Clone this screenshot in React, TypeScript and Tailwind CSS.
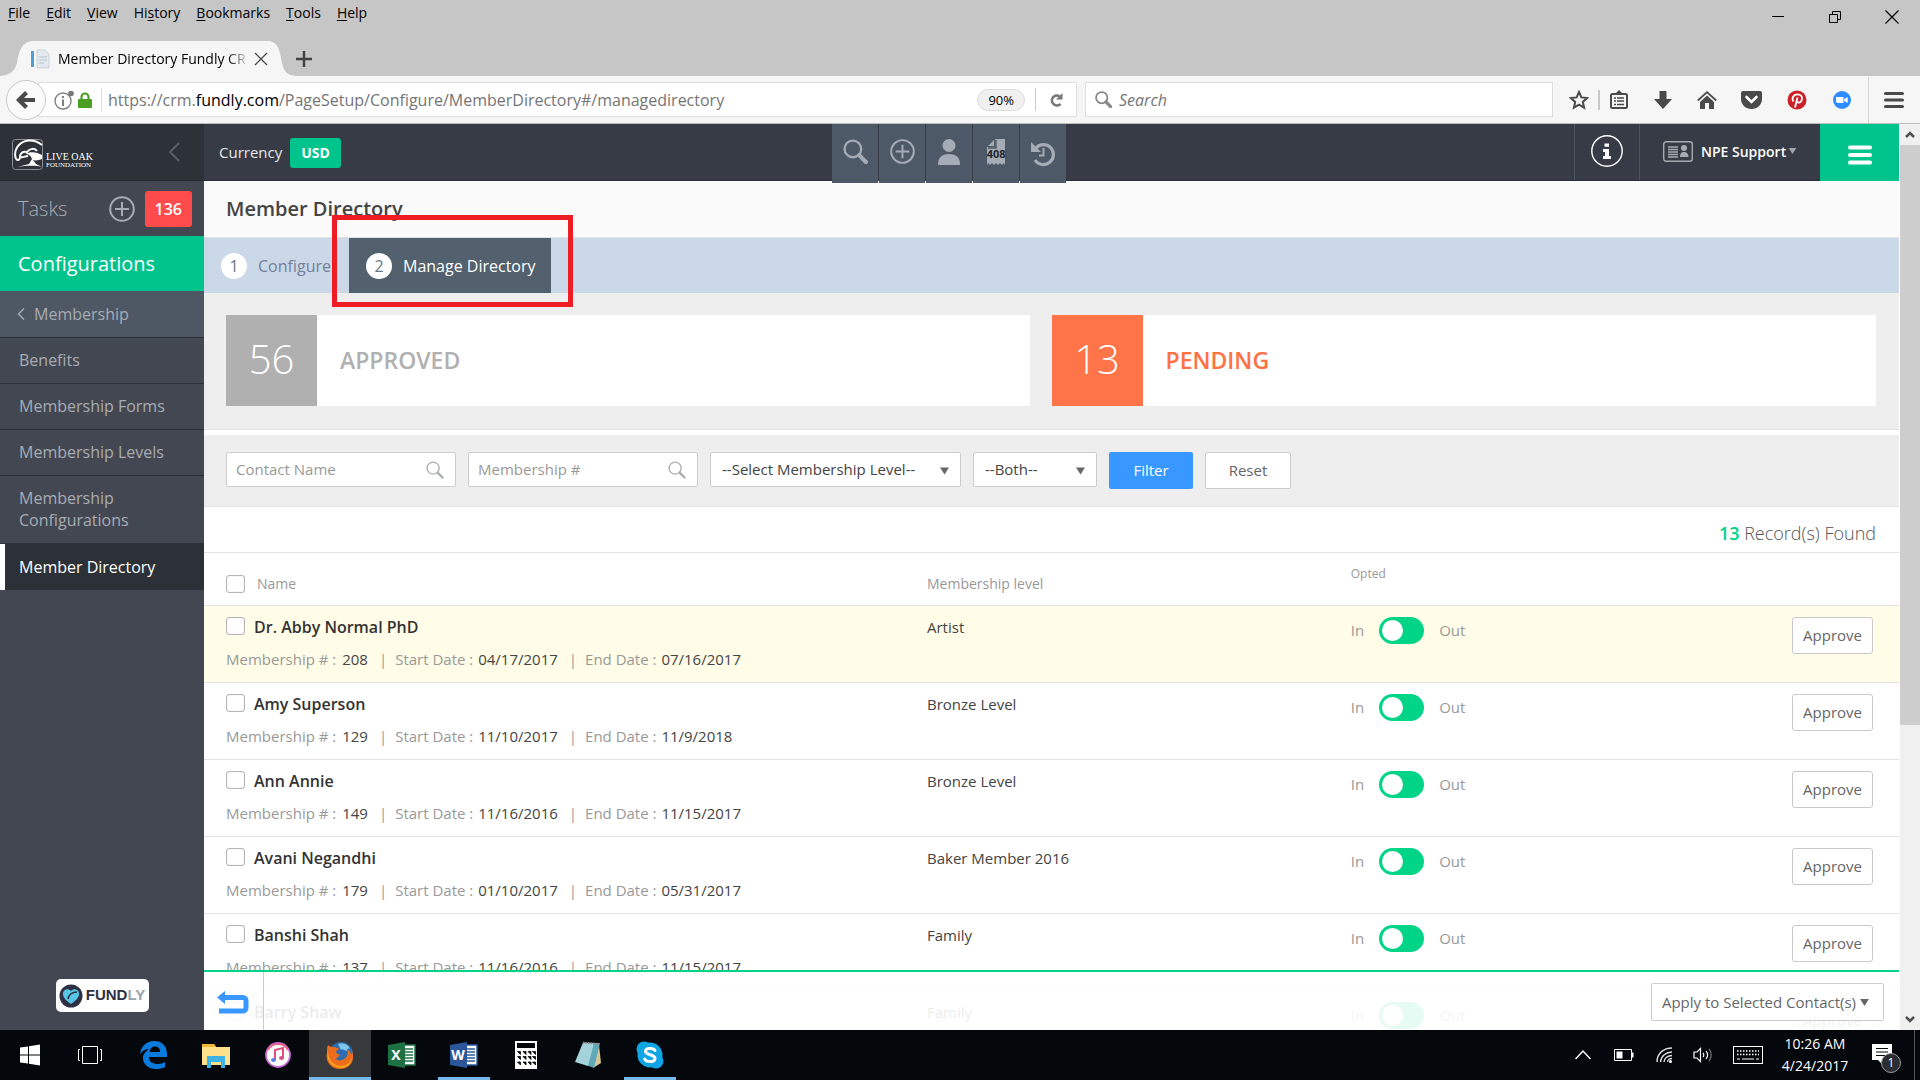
import type { ReactNode } from 'react'
import clsx from 'clsx'

const menuItems = [
  { key: 'F', before: '', after: 'ile' },
  { key: 'E', before: '', after: 'dit' },
  { key: 'V', before: '', after: 'iew' },
  { key: 's', before: 'Hi', after: 'tory' },
  { key: 'B', before: '', after: 'ookmarks' },
  { key: 'T', before: '', after: 'ools' },
  { key: 'H', before: '', after: 'elp' },
]

const sidebarLinks = ['Benefits', 'Membership Forms', 'Membership Levels', 'Membership Configurations']

interface Member {
  name: string
  number: string
  start: string
  end: string
  level: string
  highlighted?: boolean
}

const members: Member[] = [
  { name: 'Dr. Abby Normal PhD', number: '208', start: '04/17/2017', end: '07/16/2017', level: 'Artist', highlighted: true },
  { name: 'Amy Superson', number: '129', start: '11/10/2017', end: '11/9/2018', level: 'Bronze Level' },
  { name: 'Ann Annie', number: '149', start: '11/16/2016', end: '11/15/2017', level: 'Bronze Level' },
  { name: 'Avani Negandhi', number: '179', start: '01/10/2017', end: '05/31/2017', level: 'Baker Member 2016' },
  { name: 'Banshi Shah', number: '137', start: '11/16/2016', end: '11/15/2017', level: 'Family' },
  { name: 'Barry Shaw', number: '141', start: '11/16/2016', end: '11/15/2017', level: 'Family' },
]

const SearchIcon = ({ className, width = 2 }: { className?: string; width?: number }) => (
  <svg viewBox="0 0 24 24" className={className} fill="none" stroke="currentColor" aria-hidden="true">
    <circle cx="9.5" cy="9.5" r="8" strokeWidth={width} />
    <path d="M15.5 15.5 22 22" strokeWidth={width * 1.8} strokeLinecap="round" />
  </svg>
)

const PlusCircleIcon = ({ className }: { className?: string }) => (
  <svg viewBox="0 0 26 26" className={className} fill="none" stroke="currentColor" strokeWidth="2" aria-hidden="true">
    <circle cx="13" cy="13" r="11.8" />
    <path d="M13 6v14M6 13h14" />
  </svg>
)

const CaretIcon = ({ className }: { className?: string }) => (
  <svg viewBox="0 0 10 8" className={className} fill="currentColor" aria-hidden="true">
    <path d="M0 0h10L5 8z" />
  </svg>
)

/* Browser window */

const TitleBar = () => (
  <div className="flex h-[41px] shrink-0 items-start justify-between bg-[#c6c6c6]">
    <nav className="flex gap-4 pl-2 pt-[3px] text-[14px] leading-5 text-black">
      {menuItems.map(({ key, before, after }) => (
        <button key={key + after} type="button">
          {before}
          <span className="underline underline-offset-2">{key}</span>
          {after}
        </button>
      ))}
    </nav>
    <div className="flex gap-[43px] pr-[21px] pt-[10px]">
      <button type="button" aria-label="Minimize">
        <svg viewBox="0 0 14 14" className="size-[14px]" stroke="#000"><path d="M1 6.5h12" /></svg>
      </button>
      <button type="button" aria-label="Restore">
        <svg viewBox="0 0 14 14" className="size-[14px]" fill="none" stroke="#000">
          <path d="M1.5 4.5h8v8h-8zM4.5 4.5v-3h8v8h-3" />
        </svg>
      </button>
      <button type="button" aria-label="Close">
        <svg viewBox="0 0 14 14" className="size-[14px]" stroke="#000" strokeWidth="1.2"><path d="M.5.5l13 13M13.5.5l-13 13" /></svg>
      </button>
    </div>
  </div>
)

const TabStrip = () => (
  <div className="flex h-[35px] shrink-0 bg-[#c6c6c6]">
    <svg viewBox="0 0 34 35" className="h-[35px] w-[34px] shrink-0" fill="#f6f6f6" aria-hidden="true">
      <path d="M0 35c10-1 15-5 17-13C19 10 22 0 34 0v35z" />
      <path d="M31 10h3v16h-3z" fill="#4f9fd6" />
    </svg>
    <div className="flex items-center bg-[#f6f6f6]">
      <svg viewBox="0 0 16 20" className="mr-2 h-5 w-4" aria-hidden="true">
        <path d="M3 1h8l4 4v14H3z" fill="#e3e9ee" stroke="#c3ccd4" strokeWidth=".8" />
        <path d="M5 8h8M5 11h8M5 14h5" stroke="#b9c3cc" strokeWidth="1.2" />
      </svg>
      <span className="bg-gradient-to-r from-black from-88% to-[#ccc] bg-clip-text text-[14px] whitespace-nowrap text-transparent">
        Member Directory Fundly CR
      </span>
      <button type="button" aria-label="Close tab" className="ml-2">
        <svg viewBox="0 0 14 14" className="size-[14px]" stroke="#4a4a4a" strokeWidth="1.3"><path d="M1 1l12 12M13 1L1 13" /></svg>
      </button>
    </div>
    <svg viewBox="0 0 28 35" className="h-[35px] w-7 shrink-0" fill="#f6f6f6" aria-hidden="true">
      <path d="M0 0c10 0 12 10 14 22 2 8 4 12 14 13H0z" />
    </svg>
    <button type="button" aria-label="New tab">
      <svg viewBox="0 0 16 16" className="size-4" stroke="#444" strokeWidth="2.5"><path d="M8 0v16M0 8h16" /></svg>
    </button>
  </div>
)

const NavBar = () => (
  <div className="flex h-12 shrink-0 items-center border-b border-[#bcbcbc] bg-[#f6f6f6]">
    <button
      type="button"
      aria-label="Back"
      className="z-10 ml-[6px] flex size-10 shrink-0 items-center justify-center rounded-full border border-[#c8c8c8] bg-[#fafafa]"
    >
      <svg viewBox="0 0 20 20" className="size-5" fill="none" stroke="#4a4a4a" strokeWidth="4.2">
        <path d="M10.5 2.5 3 10l7.500 7.500M4 10h15" />
      </svg>
    </button>
    <div className="-ml-2 flex h-[35px] flex-1 items-center border border-[#dedede] bg-white pl-[15px]">
      <svg viewBox="0 0 20 20" className="size-5" fill="none" stroke="#808080" strokeWidth="1.4" aria-hidden="true">
        <circle cx="9" cy="11" r="8" />
        <path d="M9 9.500V16M9 6v2" strokeWidth="2" />
        <circle cx="17" cy="3.5" r="2.8" fill="#777" stroke="none" />
      </svg>
      <svg viewBox="0 0 14 16" className="ml-1 h-4 w-[14px]" aria-hidden="true">
        <path d="M3.5 8V5a3.5 3.5 0 0 1 7 0v3" fill="none" stroke="#4a9e23" strokeWidth="2.2" />
        <rect x="0" y="7" width="14" height="9" rx="1" fill="#4a9e23" />
      </svg>
      <span className="ml-[9px] h-[23px] w-px bg-[#ddd]" />
      <span className="ml-[6px] flex-1 text-[16px] text-[#757575]">
        https://crm.<span className="text-black">fundly.com</span>/PageSetup/Configure/MemberDirectory#/managedirectory
      </span>
      <button type="button" className="rounded-full border border-[#ddd] bg-[#f0f0f0] px-[10px] text-[13px] leading-5 text-black">
        90%
      </button>
      <span className="ml-[10px] h-[23px] w-px bg-[#ccc]" />
      <button type="button" aria-label="Reload" className="mx-[13px]">
        <svg viewBox="0 0 14 16" className="h-4 w-[14px]" fill="none" stroke="#777" strokeWidth="2.6">
          <path d="M10.5 4.200A5 5 0 1 0 11.5 12" />
          <path d="M13.5 1v6.500H7z" fill="#777" stroke="none" />
        </svg>
      </button>
    </div>
    <div className="ml-2 flex h-[35px] w-[468px] items-center border border-[#dedede] bg-white pl-[9px]">
      <SearchIcon className="mr-[7px] size-[17px] text-[#888]" width={2.5} />
      <input aria-label="Search" placeholder="Search" className="flex-1 text-[16px] italic outline-none placeholder:text-[#757575]" />
    </div>
    <div className="flex items-center pl-4">
      <svg viewBox="0 0 20 20" className="size-5" fill="none" stroke="#4a4a4a" strokeWidth="2" aria-hidden="true">
        <path d="m10 2 2.400 5.400 5.800.6-4.400 3.900 1.300 5.800-5.100-3-5.100 3 1.300-5.800L1.800 8l5.800-.6z" />
      </svg>
      <span className="ml-[9px] h-5 w-[2px] bg-[#c8c8c8]" />
      <svg viewBox="0 0 18 20" className="ml-[10px] h-5 w-[18px]" fill="none" stroke="#4a4a4a" strokeWidth="2" aria-hidden="true">
        <rect x="1" y="4" width="16" height="14" rx="1.5" />
        <path d="m5 4 4-4 4 4z" fill="#4a4a4a" stroke="none" />
        <path d="M4 8h2M7 8h7M4 11h2M7 11h7M4 14.500h2M7 14.500h7" strokeWidth="1.6" />
      </svg>
      <svg viewBox="0 0 18 18" className="ml-[26px] size-[18px]" fill="#4a4a4a" aria-hidden="true">
        <path d="M5.500 0h7v8H18l-9 10L0 8h5.500z" />
      </svg>
      <svg viewBox="0 0 20 18" className="ml-[25px] h-[18px] w-5" fill="#4a4a4a" aria-hidden="true">
        <path d="M10 4.500 17 11v7h-5v-6H8v6H3v-7z" />
        <path d="m.8 9.500 9.200-8.300 9.200 8.300" fill="none" stroke="#4a4a4a" strokeWidth="1.8" />
      </svg>
      <svg viewBox="0 0 21 18" className="ml-6 h-[18px] w-[21px]" aria-hidden="true">
        <path d="M2 0h17a2 2 0 0 1 2 2v6c0 6-5 10-10.500 10S0 14 0 8V2a2 2 0 0 1 2-2z" fill="#4a4a4a" />
        <path d="m5.500 6 5 5 5-5" fill="none" stroke="#fff" strokeWidth="2.6" strokeLinecap="round" />
      </svg>
      <svg viewBox="0 0 20 20" className="ml-[25px] size-5" aria-hidden="true">
        <circle cx="10" cy="10" r="9.5" fill="#cb2027" />
        <path d="M6.500 11.500C4 7.500 7 4.300 10.500 4.300c3 0 4.800 2 4.500 4.500-.3 3-2.500 4.500-4.200 3.600-.8-.4-1-.9-1-1.400M10.500 7.500 8 17.500" fill="none" stroke="#fff" strokeWidth="1.8" />
      </svg>
      <svg viewBox="0 0 18 18" className="ml-[26px] size-[18px]" aria-hidden="true">
        <circle cx="9" cy="9" r="9" fill="#2d8cff" />
        <path d="M3 6h7.500v6H5a2 2 0 0 1-2-2zM11.200 8l3.500-2v6l-3.500-2z" fill="#fff" />
      </svg>
      <span className="ml-[17px] h-[46px] w-px bg-[#d5d5d5]" />
      <button type="button" aria-label="Open menu" className="mr-4 ml-[15px]">
        <svg viewBox="0 0 20 18" className="h-[18px] w-5" stroke="#4a4a4a" strokeWidth="3" strokeLinecap="round">
          <path d="M1.500 2.500h17M1.500 9h17M1.500 15.500h17" />
        </svg>
      </button>
    </div>
  </div>
)

/* CRM page */

const Sidebar = () => (
  <aside className="flex w-[204px] shrink-0 flex-col bg-[#434751] text-[16px] text-[#a7acb4]">
    <div className="flex h-[57px] items-center justify-between border-b border-[#262b31] bg-[#2d3239] pr-6 pl-3">
      <a href="#home" className="flex items-center gap-[3px] pt-1 text-white">
        <svg viewBox="0 0 31 31" className="size-[31px]" fill="none" stroke="#fff" aria-hidden="true">
          <rect x=".5" y=".5" width="30" height="30" rx="3" stroke="#8a8f96" />
          <path d="M4 20C1 12 6 3 16 1.500c6-.5 10 1 14 4.500" strokeWidth="2" />
          <path d="M4 20c2 2 4 1 4-2 0-4 3-6 7-5 3-4 8-4 10-1M8 18c3 1 5-1 8-1" strokeWidth="2" />
          <path d="M13 15c4 0 6 2 7 5l-3 5-12 3c8-1 17-2 25 0l-6-3-3-4c3 1 6 0 9-1v-4c-5-3-11-4-17-1z" fill="#fff" stroke="none" />
        </svg>
        <span className="flex flex-col pt-3 font-['Liberation_Serif',serif]">
          <span className="text-[10px] leading-[10px]">LIVE OAK</span>
          <span className="text-[7px] leading-[7px]">FOUNDATION</span>
        </span>
      </a>
      <button type="button" aria-label="Collapse sidebar">
        <svg viewBox="0 0 12 20" className="h-5 w-3" fill="none" stroke="#5b626c" strokeWidth="1.8"><path d="M11 1 2 10l9 9" /></svg>
      </button>
    </div>
    <div className="flex h-[55px] items-center pr-3 pl-[18px]">
      <span className="flex-1 text-[20px] font-light">Tasks</span>
      <button type="button" aria-label="Add task">
        <PlusCircleIcon className="size-[26px]" />
      </button>
      <span className="ml-[10px] rounded-[3px] bg-[#ff4b4b] px-[10px] text-[16px] leading-9 font-semibold text-white">136</span>
    </div>
    <a href="#configurations" className="bg-[#00c48c] pl-[18px] text-[20px] leading-[55px] text-white">
      Configurations
    </a>
    <a href="#membership" className="flex h-[47px] items-center gap-[9px] border-b border-[#2c3138] bg-[#4e5865] pl-[17px]">
      <svg viewBox="0 0 8 12" className="h-3 w-2" fill="none" stroke="currentColor" strokeWidth="1.4" aria-hidden="true"><path d="M7 .5 1.500 6 7 11.500" /></svg>
      Membership
    </a>
    {sidebarLinks.map((label) => (
      <a key={label} href="#link" className="border-b border-[#2c3138] pt-[11px] pr-6 pb-3 pl-[19px] leading-[22px]">
        {label}
      </a>
    ))}
    <div className="border-l-[5px] border-white bg-[#2c3138] pl-[14px]">
      <a href="#directory" aria-current="page" className="block leading-[46px] text-white">Member Directory</a>
    </div>
    <div className="mx-auto mt-auto mb-[18px] flex h-[33px] w-[93px] items-center justify-center gap-[3px] rounded-[5px] bg-white">
      <svg viewBox="0 0 24 24" className="size-6" aria-hidden="true">
        <circle cx="12" cy="12" r="11.5" fill="#2f3042" />
        <path d="M12 20C6 16 3.500 12.500 4 9c.5-4 5.500-5 8-2 2.500-3 7.500-2 8 2 .5 3.500-2 7-8 11z" fill="#56c5e6" />
        <path d="M9 15c1-5 4-7 9-7" fill="none" stroke="#2f3042" strokeWidth="1.5" />
      </svg>
      <span className="font-['Liberation_Sans',sans-serif] text-[15px] font-bold text-[#2f3042]">
        FUND<span className="text-[#9ba4ab]">LY</span>
      </span>
    </div>
  </aside>
)

const ToolButton = ({ label, children }: { label: string; children: ReactNode }) => (
  <button type="button" aria-label={label} className="relative flex h-[59px] w-[46px] items-center justify-center bg-[#4e5967] pb-1 text-[#a6acb5]">
    {children}
  </button>
)

const PageHeader = () => (
  <header className="flex h-[57px] shrink-0 items-start border-b border-[#2a2f38] bg-[#363b45] text-white">
    <div className="flex h-14 w-[37%] items-center gap-2 pt-px pl-[15px] text-[15px] text-[#e4e6e9]">
      Currency
      <button type="button" className="rounded-[3px] bg-[#00c48c] px-[11px] text-[14px] leading-[30px] font-bold text-white">USD</button>
    </div>
    <div className="z-10 ml-px flex gap-px">
      <ToolButton label="Search"><SearchIcon className="size-[25px]" width={2.2} /></ToolButton>
      <ToolButton label="Add"><PlusCircleIcon className="size-[25px]" /></ToolButton>
      <ToolButton label="Contacts">
        <svg viewBox="0 0 22 26" className="h-[26px] w-[22px]" fill="currentColor">
          <circle cx="11" cy="6.5" r="6.5" />
          <path d="M0 26c0-7 3-11 11-11s11 4 11 11z" />
        </svg>
      </ToolButton>
      <ToolButton label="Receipts">
        <svg viewBox="0 0 18 26" className="h-[26px] w-[18px]" fill="currentColor">
          <path d="M8 0h10v26l-1.500-2-1.500 2-2-2-2 2-2-2-2 2-2-2-2 2-1.500-2L0 26V8h8z" />
          <path d="M7 1v6H1z" />
          <path d="M9 1v8H1" fill="none" stroke="#4e5967" strokeWidth="1.5" />
        </svg>
        <span className="absolute inset-x-0 top-[22px] text-center text-[11px] leading-4 font-bold text-[#22262c]">408</span>
      </ToolButton>
      <ToolButton label="History">
        <svg viewBox="0 0 24 26" className="mt-1 h-[26px] w-6" fill="none" stroke="currentColor" strokeWidth="3.2">
          <path d="M4.500 7.500A10 10 0 1 1 4 19" />
          <path d="M0 1v10h10z" fill="currentColor" stroke="none" />
          <path d="M12.500 7v7.500H8" strokeWidth="2" />
        </svg>
      </ToolButton>
    </div>
    <div className="ml-auto flex h-14 items-center">
      <button type="button" aria-label="Information" className="flex h-14 w-[65px] items-center justify-center border-l border-[#4b5260] pb-[2px]">
        <svg viewBox="0 0 32 32" className="size-8" fill="none" stroke="#fff" strokeWidth="1.4">
          <circle cx="16" cy="16" r="15.2" />
          <path d="M13.500 8.500h4.500v3.200h-4.500zM12 14h6v7h2v3h-8v-3h2v-4h-2z" fill="#fff" stroke="none" />
        </svg>
      </button>
      <button type="button" className="flex h-14 w-[181px] items-center border-l border-[#4b5260] pb-[2px] pl-[23px] text-[14px] font-semibold">
        <svg viewBox="0 0 30 21" className="mr-2 h-[21px] w-[30px]" fill="none" stroke="#a6abb2" aria-hidden="true">
          <rect x=".7" y=".7" width="28.6" height="19.6" rx="2.5" strokeWidth="1.4" />
          <path d="M5 6h10M5 8.500h10M5 11h10M5 13.500h10M5 16h10" strokeWidth="1.3" />
          <circle cx="21" cy="7" r="3" fill="#a6abb2" stroke="none" />
          <path d="M17 16c0-3 1-5 4-5s4.500 2 4.500 5z" fill="#a6abb2" stroke="none" />
        </svg>
        NPE Support
        <CaretIcon className="ml-[2px] h-[6px] w-[9px] text-[#a0a7b3]" />
      </button>
      <button type="button" aria-label="Menu" className="flex h-[57px] w-[79px] items-center justify-center self-start bg-[#00c48c]">
        <svg viewBox="0 0 24 20" className="mt-1 h-5 w-6" stroke="#fff" strokeWidth="4" strokeLinecap="round">
          <path d="M2 2.500h20M2 10h20M2 17.500h20" />
        </svg>
      </button>
    </div>
  </header>
)

const StepNumber = ({ children }: { children: ReactNode }) => (
  <span className="flex size-[26px] items-center justify-center rounded-full bg-white text-[16px] text-[#6b7785]">{children}</span>
)

const Steps = () => (
  <nav className="flex h-[55px] shrink-0 bg-[#cbd8e8] text-[16px]">
    <a href="#configure" className="flex w-[145px] items-center gap-[11px] pl-[17px] text-[#73819a]">
      <StepNumber>1</StepNumber>
      Configure
    </a>
    <a href="#manage" aria-current="step" className="relative flex items-center gap-[11px] bg-[#53606d] pr-[15px] pl-[17px] whitespace-nowrap text-white">
      <StepNumber>2</StepNumber>
      Manage Directory
      <span className="pointer-events-none absolute -top-[23px] -right-[22px] -bottom-[14px] -left-[17px] border-[5px] border-[#ee1c24]" />
    </a>
  </nav>
)

const CountCard = ({ count, label, pending }: { count: number; label: string; pending?: boolean }) => (
  <div className={clsx('flex h-[91px] flex-1 items-center bg-white text-[23px] font-semibold', pending ? 'text-[#ff7043]' : 'text-[#b0b0b0]')}>
    <span
      className={clsx(
        'flex h-full w-[91px] items-center justify-center pb-1 text-[40px] font-light text-white',
        pending ? 'bg-[#ff7448]' : 'bg-[#b0b0b0]',
      )}
    >
      {count}
    </span>
    <span className="pl-[23px]">{label}</span>
  </div>
)

const FilterInput = ({ label }: { label: string }) => (
  <div className="relative w-[230px]">
    <input
      aria-label={label}
      placeholder={label}
      className="h-[35px] w-full rounded-[2px] border border-[#ccc] bg-white pr-9 pb-[2px] pl-[9px] text-[15px] outline-none placeholder:text-[#999]"
    />
    <SearchIcon className="absolute top-[9px] right-3 size-[18px] text-[#a9afb5]" width={1.8} />
  </div>
)

const FilterSelect = ({ label, option, className }: { label: string; option: string; className: string }) => (
  <div className={clsx('relative', className)}>
    <select aria-label={label} className="h-[35px] w-full appearance-none rounded-[2px] border border-[#ccc] bg-white pl-[11px] text-[15px] text-[#444] outline-none">
      <option>{option}</option>
    </select>
    <CaretIcon className="pointer-events-none absolute top-[15px] right-3 h-2 w-[9px] text-[#666]" />
  </div>
)

const Filters = () => (
  <form className="mt-[5px] flex h-[72px] shrink-0 items-start border-b border-[#e2e2e2] bg-[#eee] pt-[17px] pl-[22px]">
    <div className="flex gap-3">
      <FilterInput label="Contact Name" />
      <FilterInput label="Membership #" />
      <FilterSelect label="Membership level" option="--Select Membership Level--" className="w-[251px]" />
      <FilterSelect label="Status" option="--Both--" className="w-[124px]" />
      <button type="button" className="h-[37px] w-[84px] rounded-[2px] bg-[#3898ff] text-[15px] text-white">Filter</button>
      <button type="button" className="h-[37px] w-[86px] rounded-[2px] border border-[#ccc] bg-white text-[15px] text-[#666]">Reset</button>
    </div>
  </form>
)

const CheckBox = ({ label, className }: { label: string; className?: string }) => (
  <input
    type="checkbox"
    aria-label={label}
    className={clsx('h-[18px] w-[19px] shrink-0 appearance-none rounded-[3px] border border-[#b5b5b5] bg-white shadow-[inset_0_0_1px_#bbb]', className)}
  />
)

const MemberRow = ({ name, number, start, end, level, highlighted }: Member) => (
  <tr className={clsx('h-[77px] border-b border-[#e2e2e2] align-top', highlighted && 'bg-[#fffde7]')}>
    <td className="pl-[22px]">
      <label className="flex items-center gap-[9px] pt-[9px] text-[16px] leading-6 font-semibold text-[#333]">
        <CheckBox label={name} className="-mt-[2px]" />
        {name}
      </label>
      <div className="mt-2 flex text-[15px] leading-6 text-[#999]">
        <span className="pr-[11px]">Membership # : <span className="pl-[2px] text-[#444]">{number}</span></span>|
        <span className="pr-[11px] pl-2">Start Date : <span className="pl-px text-[#444]">{start}</span></span>|
        <span className="pl-2">End Date : <span className="pl-px text-[#444]">{end}</span></span>
      </div>
    </td>
    <td className="pt-[10px] text-[15px] leading-[22px] text-[#444]">{level}</td>
    <td className="pt-[11px]">
      <label className="flex w-fit items-center gap-[15px] text-[15px] text-[#999]">
        In
        <input
          type="checkbox"
          role="switch"
          aria-label={`${name} opted out`}
          className="h-[27px] w-[45px] appearance-none rounded-full bg-[#00d587] before:mt-[3px] before:ml-[3px] before:block before:size-[21px] before:rounded-full before:bg-white"
        />
        Out
      </label>
    </td>
    <td className="pt-[11px] pr-[26px] text-right">
      <button type="button" className="h-[37px] rounded-[3px] border border-[#c9c9c9] bg-white px-[10px] text-[15px] text-[#666]">Approve</button>
    </td>
  </tr>
)

const MemberTable = () => (
  <table className="w-full table-fixed border-collapse text-left">
    <colgroup>
      <col className="w-[723px]" />
      <col className="w-[25%]" />
      <col />
      <col className="w-[150px]" />
    </colgroup>
    <thead>
      <tr className="h-[52px] border-b border-[#e2e2e2] align-top text-[14px] leading-5 text-[#999]">
        <th className="pt-[21px] pl-[22px] font-normal">
          <span className="flex items-center gap-3">
            <CheckBox label="Select all" />
            Name
          </span>
        </th>
        <th className="pt-[21px] font-normal">Membership level</th>
        <th className="pt-[11px] text-[12px] font-normal">Opted</th>
        <th aria-label="Actions" />
      </tr>
    </thead>
    <tbody>
      {members.map((member) => (
        <MemberRow key={member.name} {...member} />
      ))}
    </tbody>
  </table>
)

const ActionBar = () => (
  <footer className="absolute inset-x-0 bottom-0 flex h-[60px] items-center justify-between border-t-2 border-[#00d587] bg-white/90 pr-[15px]">
    <button type="button" aria-label="Back to configure" className="flex h-full w-[60px] items-center justify-center border-r border-[#ccc] pt-1 pr-[2px]">
      <svg viewBox="0 0 32 24" className="h-6 w-8" fill="none" stroke="#3898ff" strokeWidth="5">
        <path d="M5 6.500h21a3 3 0 0 1 3 3V17a3 3 0 0 1-3 3H2" />
        <path d="M8 0v13L0 6.500z" fill="#3898ff" stroke="none" />
      </svg>
    </button>
    <button type="button" className="mt-[2px] flex h-[38px] items-center rounded-[2px] border border-[#ccc] bg-white px-[10px] text-[15px] text-[#666]">
      Apply to Selected Contact(s)
      <CaretIcon className="mx-1 h-[7px] w-[9px]" />
    </button>
  </footer>
)

const ScrollBar = () => (
  <div className="flex w-[21px] shrink-0 flex-col items-center border-l border-white bg-[#f0f0f0]">
    <svg viewBox="0 0 20 21" className="h-[21px] w-5 shrink-0" fill="none" stroke="#505050" strokeWidth="2.5" aria-hidden="true"><path d="m6 13 4-4 4 4" /></svg>
    <span className="h-[64%] w-5 bg-[#cdcdcd]" />
    <svg viewBox="0 0 20 21" className="mt-auto h-[21px] w-5 shrink-0" fill="none" stroke="#505050" strokeWidth="2.5" aria-hidden="true"><path d="m6 8 4 4 4-4" /></svg>
  </div>
)

/* Taskbar */

const TaskItem = ({ label, active, open, children }: { label: string; active?: boolean; open?: boolean; children: ReactNode }) => (
  <button
    type="button"
    aria-label={label}
    className={clsx('relative flex h-full w-[62px] items-center justify-center', active && 'bg-[#37393c]')}
  >
    <svg viewBox="0 0 28 28" className="size-7">{children}</svg>
    {(active || open) && <span className={clsx('absolute bottom-0 h-[3px] bg-[#76b9ed]', active ? 'inset-x-0' : 'inset-x-[5px]')} />}
  </button>
)

const OfficeIcon = ({ color, letter }: { color: string; letter: string }) => (
  <>
    <path d="M15 4h12v20H15z" fill="#fff" stroke={color} strokeWidth="1.5" />
    <path d="M17 8h8M17 11h8M17 14h8M17 17h8M17 20h8" stroke={color} strokeWidth="1.5" />
    <path d="M0 4 17 1v26L0 24z" fill={color} />
    <text x="8" y="19" textAnchor="middle" fill="#fff" fontSize="14" fontWeight="700">{letter}</text>
  </>
)

const TaskBar = () => (
  <div className="flex h-[50px] shrink-0 items-center justify-between bg-[#04070b] text-white">
    <div className="-ml-px flex h-full">
      <TaskItem label="Start">
        <path d="M4 6.500 12 5.400v8.100H4zM13 5.200 24 3.600v9.900H13zM4 14.500h8v8.100l-8-1.100zM13 14.500h11v9.900l-11-1.600z" fill="#fff" />
      </TaskItem>
      <TaskItem label="Task View">
        <path d="M4.500 5.500h15v17h-15zM2 8.500H.5v11H2M22 8.500h1.500v11H22" fill="none" stroke="#fff" />
      </TaskItem>
      <TaskItem label="Edge">
        <path d="M0 13C1 5 7 0 14 0c9 0 13 6 13 13v3H9c0 5 4 7 9 7 3 0 5-1 7-2v5c-3 1.500-6 2-9 2-8 0-13-5-13-11 0-4 3-7 6-9-4 0-7 2-9 5zM9.500 11H20c0-3-1-5.500-5-5.500-3 0-5 2-5.500 5.500z" fill="#0a7bdc" />
      </TaskItem>
      <TaskItem label="File Explorer">
        <path d="M0 3h12l2 3h14v18H0z" fill="#ffe08a" />
        <path d="M0 3h12l2 3H0z" fill="#f2b632" />
        <path d="M5 15h18v12h-4v-6H9v6H5z" fill="#3db3e6" />
      </TaskItem>
      <TaskItem label="iTunes">
        <circle cx="14" cy="14" r="12" fill="#fff" stroke="#c56bd6" strokeWidth="1.8" />
        <path d="M4 9a11.500 11.500 0 0 1 20 0" fill="none" stroke="#f2607d" strokeWidth="1.8" />
        <path d="M11 19V9l8-2v10" fill="none" stroke="#e0507f" strokeWidth="2" />
        <ellipse cx="9.5" cy="19" rx="2.5" ry="2" fill="#5c7cf0" />
        <ellipse cx="17.5" cy="17" rx="2.5" ry="2" fill="#e0507f" />
      </TaskItem>
      <TaskItem label="Firefox" active>
        <circle cx="15" cy="13" r="12" fill="#2d6cb0" />
        <path d="M12 3c5-2 10 0 12 5-2-1-3 0-3 2-3-1-5-2-6-1z" fill="#7fc6e8" />
        <path d="M2 4c1 1 3 2 5 2 3 0 5 1 6 2-2 1-3 2-3 4 2 1 3 1 4 2-1 2-3 2-4 4 3 3 9 1 11-3 1-3 1-5 0-7 3 2 4 4 4 6 1-2 1-4 0-6 5 9 1 20-11 20C4 28-1 19 1 12c0-3 0-6 1-8z" fill="#ee6d1c" />
        <path d="M2 9c0 9 4 15 12 16 6 0 10-3 12-8-1 7-6 10-12 10C4 26 0 18 2 9z" fill="#f9a51d" />
      </TaskItem>
      <TaskItem label="Excel"><OfficeIcon color="#1e7145" letter="X" /></TaskItem>
      <TaskItem label="Word" open><OfficeIcon color="#2b579a" letter="W" /></TaskItem>
      <TaskItem label="Calculator">
        <path d="M3 0h22v28H3z" fill="#fff" />
        <path d="M5 2h18v5H5z" fill="#04070b" />
        <path d="M5.500 10.500h3v3zM11 10.500h3v3zM16 10.500h3v3zM20.500 10.500h3v3zM5.500 15.500h3v3zM11 15.500h3v3zM16 15.500h3v3zM20.500 15.500h3v3zM5.500 21h3v3zM11 21h3v3zM16 21h3v3zM20.500 21h3v3z" fill="#04070b" stroke="#04070b" strokeWidth=".8" />
      </TaskItem>
      <TaskItem label="Notepad">
        <path d="m25 4 2 18-8 5z" fill="#d8c79a" />
        <path d="M16 2h10l-6 25-8-3z" fill="#5fa9b8" />
        <path d="M9 1.500 20 2l-6 23L1 21z" fill="#a5d3dc" />
        <path d="M9 1.500 25 3" stroke="#888" strokeWidth="2" strokeDasharray="1.5 1" />
      </TaskItem>
      <TaskItem label="Skype" open>
        <circle cx="8" cy="8" r="7.5" fill="#12a5e5" />
        <circle cx="20" cy="20" r="7.5" fill="#12a5e5" />
        <circle cx="14" cy="14" r="12.5" fill="#12a5e5" />
        <path d="M19 9.500C18 7 9.500 6.300 9.500 10.300c0 4.200 9.500 2.700 9.500 7.200 0 4.300-9 3.700-10.200.5" fill="none" stroke="#fff" strokeWidth="3" strokeLinecap="round" />
      </TaskItem>
    </div>
    <div className="flex h-full items-center">
      <svg viewBox="0 0 16 16" className="size-4" fill="none" stroke="#fff" strokeWidth="1.5" aria-hidden="true"><path d="m.5 12 7.500-8 7.500 8" /></svg>
      <svg viewBox="0 0 20 12" className="ml-[23px] h-3 w-5" fill="none" stroke="#fff" aria-hidden="true">
        <path d="M.5.500h17v11H.5z" />
        <path d="M2.500 2.500h6v7h-6zM18 3.500h1.500v5H18z" fill="#fff" stroke="none" />
      </svg>
      <svg viewBox="0 0 16 16" className="ml-[22px] size-4" fill="none" stroke="#ddd" strokeWidth="1.4" aria-hidden="true">
        <path d="M1 15C1 6 8 1 16 1M4.500 15C5 9 10 5 16 5M8 15c0-4 4-6.500 8-6.500M11.500 15c0-2 2-3.500 4.500-3.500" />
        <circle cx="14.5" cy="14.5" r="1.5" fill="#fff" stroke="none" />
      </svg>
      <svg viewBox="0 0 20 16" className="ml-[21px] h-4 w-5" fill="none" stroke="#fff" strokeWidth="1.2" aria-hidden="true">
        <path d="M1 5h3l3.500-3.500v13L4 11H1zM10 6c1 1 1 3 0 4M13 4c2 2.500 2 5.500 0 8" />
        <path d="M16 2c3 3.500 3 8.500 0 12" stroke="#777" />
      </svg>
      <svg viewBox="0 0 30 18" className="ml-5 h-[18px] w-[30px]" fill="none" stroke="#fff" aria-hidden="true">
        <rect x=".5" y=".5" width="29" height="17" />
        <path d="M4 5h22M4 8.500h22" strokeDasharray="1.5 1.5" strokeWidth="1.4" />
        <path d="M4 13h3M9 13h12M23 13h3" />
      </svg>
      <div className="ml-3 w-20 text-center text-[14px] leading-[22px]">
        <div>10:26 AM</div>
        <div>4/24/2017</div>
      </div>
      <button type="button" aria-label="Notifications" className="relative mr-4 ml-[13px] h-[30px] w-[30px]">
        <svg viewBox="0 0 30 30" className="size-[30px]" fill="none">
          <path d="M4 4h20v16h-9v5l-5-5H4z" fill="#fff" />
          <path d="M8 8.500h12M8 12h12M8 15.500h12" stroke="#04070b" />
        </svg>
        <span className="absolute top-[13px] left-[13px] flex size-5 items-center justify-center rounded-full border border-[#999] bg-[#2a2d31] text-[12px]">1</span>
      </button>
      <span className="mr-[5px] h-full w-px bg-[#555]" />
    </div>
  </div>
)

export default function App() {
  return (
    <div className="flex h-screen flex-col overflow-hidden bg-white font-['Open_Sans',sans-serif]">
      <TitleBar />
      <TabStrip />
      <NavBar />
      <div className="flex min-h-0 flex-1">
        <Sidebar />
        <main className="relative flex min-w-0 flex-1 flex-col overflow-hidden">
          <PageHeader />
          <h1 className="border-b border-[#e2e2e2] bg-[#fafafa] pl-[22px] text-[20px] leading-[56px] font-semibold text-[#444]">Member Directory</h1>
          <Steps />
          <section className="grid shrink-0 grid-cols-2 border-b border-[#e2e2e2] bg-[#eee] pt-[22px] pb-[23px]">
            <div className="flex px-[22px]"><CountCard count={56} label="APPROVED" /></div>
            <div className="flex pr-[23px]"><CountCard count={13} label="PENDING" pending /></div>
          </section>
          <Filters />
          <p className="border-b border-[#e2e2e2] pt-3 pr-[23px] pb-[5px] text-right text-[18px] leading-7 font-light text-[#555]">
            <span className="font-semibold text-[#00d587]">13</span> Record(s) Found
          </p>
          <MemberTable />
          <ActionBar />
        </main>
        <ScrollBar />
      </div>
      <TaskBar />
    </div>
  )
}
